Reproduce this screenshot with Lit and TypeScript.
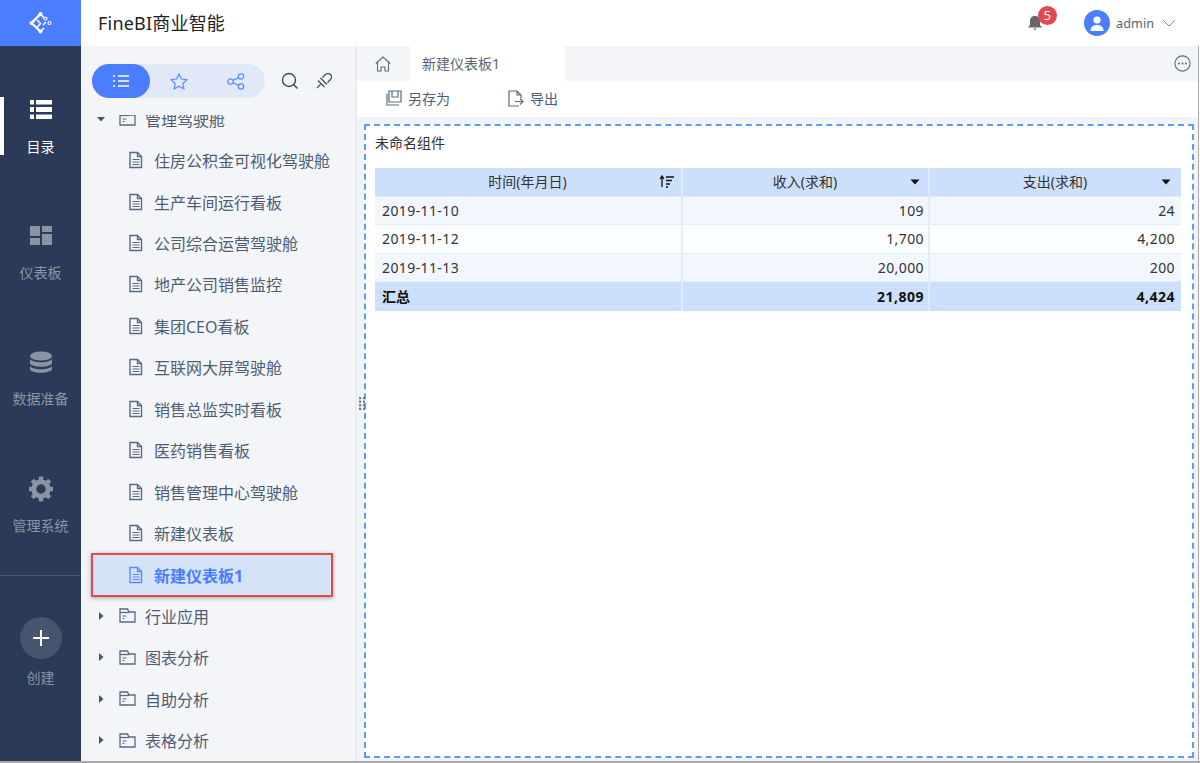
import { LitElement, html, css, svg } from "lit";
import { customElement } from "lit/decorators.js";

const docIcon = (c = "#5a6a80") => html`<svg class="doc" width="16" height="18" viewBox="0 0 16 18" fill="none" stroke=${c} stroke-width="1.4"><path d="M2 1.500h7.500l4 4V16.500H2z"/><path d="M9.500 1.500v4h4"/><path d="M4.500 8.500h7M4.500 11h7M4.500 13.500h7" stroke-width="1.100"/></svg>`;
const folderIcon = html`<svg class="folder" width="17" height="15" viewBox="0 0 17 15" fill="none" stroke="#5a6a80" stroke-width="1.300"><path d="M1 14V1h7.500l1.500 3H16V14z"/><path d="M1 4.500h9"/><path d="M3.500 8h4M3.500 10.500h2" stroke-width="1.100"/></svg>`;
const triDown = html`<svg class="tri" width="10" height="10" viewBox="0 0 10 10"><path d="M1 3h8L5 7.500z" fill="#46566c"/></svg>`;
const triRight = html`<svg class="tri" width="10" height="10" viewBox="0 0 10 10"><path d="M3 1l4.500 4L3 9z" fill="#46566c"/></svg>`;
const sortDown = html`<svg width="10" height="6" viewBox="0 0 10 6"><path d="M0.500 0.500h9L5 5.500z" fill="#111"/></svg>`;
const gearTeeth = [0, 45, 90, 135, 180, 225, 270, 315].map((a) => svg`<rect x="9.800" y="0.500" width="4.400" height="5" rx="0.800" transform="rotate(${a} 12 13)"/>`);
const gripDots = [0, 1].flatMap((c) => [0, 1, 2, 3].map((r) => svg`<rect x=${c * 4} y=${r * 3.6} width="2.200" height="2.200"/>`));

@customElement("app-root")
export class AppRoot extends LitElement {
  static styles = css`
    :host { display: block; width: 1200px; height: 763px; overflow: hidden; background: #fff;
      font-family: "Noto Sans", "Noto Sans CJK SC", sans-serif; color: #3d4d66; }
    * { box-sizing: border-box; }
    .app { display: grid; grid-template-columns: 81px 1fr; height: 763px; border-bottom: 2px solid #a9a9a9; }
    .rail { background: #2a3a57; display: flex; flex-direction: column; min-height: 0; }
    .logo { height: 46px; background: #4a7dff; display: flex; align-items: center; justify-content: center; flex: none; }
    .rail-items { display: flex; flex-direction: column; padding-top: 46px; height: 529px; flex: none; }
    .rail-item { height: 126.400px; flex: none; display: flex; flex-direction: column; align-items: center; gap: 12.500px; padding-top: 5px;
      font-size: 14px; color: #8b94a5; position: relative; }
    .rail-item.on { color: #fff; }
    .rail-item.on::before { content: ""; position: absolute; left: 0; top: 5px; width: 4px; height: 58px; background: #fff; }
    .rail-item svg { height: 26px; flex: none; }
    .rail-sep { height: 1px; background: #4a586f; flex: none; }
    .create { display: flex; flex-direction: column; align-items: center; gap: 8px; padding-top: 41px; font-size: 14px; color: #8b94a5; }
    .plus { width: 42px; height: 42px; border-radius: 50%; background: #46546e; display: flex; align-items: center; justify-content: center; }

    .right { display: grid; grid-template-rows: 46px 1fr; min-width: 0; min-height: 0; }
    .header { display: flex; align-items: center; padding-left: 17px; padding-right: 24px; background: #fff; }
    .title { font-size: 18px; color: #222; flex: 1; letter-spacing: 0.200px; padding-bottom: 2px; }
    .bell { position: relative; width: 14px; height: 20px; margin-right: 42px; display: flex; }
    .bell svg { margin-top: 2px; }
    .badge { position: absolute; left: 9.500px; top: -7.500px; width: 19px; height: 19px; border-radius: 50%; background: #e5484d;
      color: #fff; font-size: 13px; display: flex; align-items: center; justify-content: center; }
    .avatar { width: 26px; height: 26px; border-radius: 50%; background: #4a7dff; display: flex; align-items: center; justify-content: center; margin-right: 6px; }
    .user { font-size: 12.700px; color: #5c6470; margin-right: 8px; }

    .body { display: grid; grid-template-columns: 276px 1fr; min-height: 0; }
    .panel { background: #f3f5f9; border-right: 2px solid #e8ebf0; position: relative; z-index: 2; display: flex; flex-direction: column; min-height: 0; }
    .tools { display: flex; align-items: center; height: 36px; margin: 17px 0 0 11px; flex: none; }
    .seg { width: 173px; height: 34px; background: #e1e8f7; border-radius: 17px; display: grid; grid-template-columns: 58px 1fr 1fr; align-items: center; justify-items: center; margin-right: 16px; }
    .seg .active { width: 58px; height: 34px; border-radius: 17px; background: #4a7dff; display: flex; align-items: center; justify-content: center; }
    .pin { margin-left: 17px; }
    .tree-clip { overflow: hidden; margin-top: 16px; flex: 1; min-height: 0; }
    .tree { display: flex; flex-direction: column; margin-top: -17px; }
    .row { height: 41.430px; display: flex; align-items: center; font-size: 16px; color: #4e5d74; white-space: nowrap; flex: none; }
    .row.folder-row { padding-left: 15px; }
    .row .tri { margin-right: 13px; }
    .row .folder { margin-right: 9px; }
    .row.doc-row { padding-left: 47px; }
    .row .doc { margin-right: 10px; }
    .row.sel { margin: -0.500px 0 -2.070px 10px; width: 242px; height: 44px; padding-left: 35px; background: #d5e3f8; border: 2px solid #e5484d;
      box-shadow: 0 1px 4px rgba(60,60,60,.45); color: #4a7dff; font-weight: 700; }
    .grip { position: absolute; left: 278px; top: 351px; display: flex; }

    .main { display: grid; grid-template-rows: 35px 36px 1fr; min-width: 0; min-height: 0; background: #f1f3f7; margin-right: 1px; border-right: 1px solid #a9a9a9; }
    .tabs { display: flex; align-items: stretch; background: #f3f5f9; }
    .home { width: 53px; display: flex; align-items: center; justify-content: center; padding-right: 2px; }
    .tab { width: 155px; background: #fff; font-size: 14px; color: #5a6576; display: flex; align-items: center; padding: 0 0 2px 12px; }
    .spacer { flex: 1; }
    .more { width: 25px; display: flex; align-items: center; justify-content: center; padding: 0 6px 0 0; }
    .toolbar { background: #fff; display: flex; align-items: center; font-size: 14px; color: #4e5d74; padding: 0 0 2px 29px; }
    .tb { display: flex; align-items: center; gap: 6px; }
    .tb.first { width: 122px; }
    .canvas { padding: 7px 4px 3px 7px; min-height: 0; }
    .widget { height: 100%; background: #fff; border: 2px dashed #5a9df8; padding: 0 11px 0 9px; display: flex; flex-direction: column; }
    .wt { font-size: 14px; color: #333; height: 42px; padding-bottom: 10px; display: flex; align-items: center; flex: none; }
    .table { display: grid; grid-template-columns: 308px 247px 1fr; font-size: 14px; color: #333; }
    .c { height: 28.500px; display: flex; align-items: center; padding: 0 6px 0 7px; border-right: 2px solid #e2edfc; border-bottom: 1.500px solid #e2edfc; }
    .c:nth-child(3n) { border-right: 0; }
    .c:nth-child(3n+2) { padding-right: 4px; }
    .h { background: #cce0fb; justify-content: center; position: relative; border-color: #dfeafb; padding: 0 7px 1px 6px; }
    .h:nth-child(2) { padding-right: 7px; }
    .h .s { position: absolute; right: 10px; top: 11px; display: flex; }
    .h:nth-child(2) .s { right: 8px; }
    .h .sf { top: 7px; right: 7px; }
    .odd { background: #f2f7fe; letter-spacing: 0.400px; }
    .even { background: #fcfdff; letter-spacing: 0.400px; }
    .r { justify-content: flex-end; }
    .t { background: #cce0fb; font-weight: 700; border-bottom: 0; border-color: #dfeafb; color: #111; }
    .t.r { letter-spacing: 0.500px; }
  `;

  render() {
    const docs = ["住房公积金可视化驾驶舱", "生产车间运行看板", "公司综合运营驾驶舱", "地产公司销售监控", "集团CEO看板", "互联网大屏驾驶舱", "销售总监实时看板", "医药销售看板", "销售管理中心驾驶舱", "新建仪表板"];
    const folders = ["行业应用", "图表分析", "自助分析", "表格分析"];
    const rows = [["2019-11-10", "109", "24"], ["2019-11-12", "1,700", "4,200"], ["2019-11-13", "20,000", "200"]];
    return html`<div class="app">
      <aside class="rail">
        <div class="logo">
          <svg width="24" height="24" viewBox="0 0 24 24" fill="none" stroke="#fff">
            <path d="M11.500 3 2.500 12l9 8.500" stroke-width="2.400"/>
            <path d="M11.500 3l3.500 4M8 9l3.500 3.500L8 16.500M11.500 20.500l3.500-3.500M14 14l3-3" stroke-width="1.500"/>
            <circle cx="11.500" cy="3" r="2" fill="#fff" stroke="none"/><circle cx="2.500" cy="12" r="2" fill="#fff" stroke="none"/><circle cx="11.500" cy="20.500" r="2" fill="#fff" stroke="none"/>
            <circle cx="16.500" cy="7.500" r="1.500" stroke-width="1.100"/><circle cx="20.500" cy="12" r="1.500" stroke-width="1.100"/>
          </svg>
        </div>
        <div class="rail-items">
          <div class="rail-item on">
            <svg width="24" height="26" viewBox="0 0 24 26" fill="#fff"><path d="M1 3h4v4.500H1zM7 3h16v4.500H7zM1 10h4v5H1zM7 10h16v5H7zM1 17.500h4V22H1zM7 17.500h16V22H7z"/></svg>
            <span>目录</span>
          </div>
          <div class="rail-item">
            <svg width="22" height="26" viewBox="0 0 22 26" fill="#8b94a5"><path d="M0 3h10v10H0zM12 3h10v6H12zM12 11h10v11H12zM0 15h10v7H0z"/></svg>
            <span>仪表板</span>
          </div>
          <div class="rail-item">
            <svg width="24" height="26" viewBox="0 0 24 26" fill="#8b94a5"><ellipse cx="12" cy="6" rx="11" ry="4.500"/><path d="M1 8.500c1 5 21 5 22 0v4.500c-1 5-21 5-22 0zM1 15.500c1 5 21 5 22 0v3.500c-1 5-21 5-22 0z"/></svg>
            <span>数据准备</span>
          </div>
          <div class="rail-item">
            <svg width="24" height="26" viewBox="0 0 24 26" fill="#8b94a5">${gearTeeth}<circle cx="12" cy="13" r="7.200" fill="none" stroke="#8b94a5" stroke-width="5"/></svg>
            <span>管理系统</span>
          </div>
        </div>
        <div class="rail-sep"></div>
        <div class="create">
          <div class="plus"><svg width="16" height="16" viewBox="0 0 16 16"><path d="M8 0v16M0 8h16" stroke="#fff" stroke-width="2"/></svg></div>
          <span>创建</span>
        </div>
      </aside>
      <div class="right">
        <header class="header">
          <div class="title">FineBI商业智能</div>
          <div class="bell">
            <svg width="14" height="16" viewBox="0 0 14 16"><path d="M7 1c3 0 5 2 5 5v4l2 2.500H0L2 10V6c0-3 2-5 5-5zM5.500 13.500h3L7 15.500z" fill="#666"/></svg>
            <div class="badge">5</div>
          </div>
          <div class="avatar"><svg width="14" height="15" viewBox="0 0 14 15" fill="#fff"><circle cx="7" cy="4" r="3.600"/><path d="M0.500 15c0-4 2.500-6 6.500-6s6.500 2 6.500 6z"/></svg></div>
          <div class="user">admin</div>
          <svg width="14" height="8" viewBox="0 0 14 8" fill="none" stroke="#7c8490" stroke-width="1"><path d="M1 1l6 6 6-6"/></svg>
        </header>
        <div class="body">
          <section class="panel">
            <div class="tools">
              <div class="seg">
                <div class="active"><svg width="16" height="12" viewBox="0 0 16 12" stroke="#fff" stroke-width="1.300"><path d="M0 1h2M5 1h11M0 6h2M5 6h11M0 11h2M5 11h11"/></svg></div>
                <svg width="18" height="17" viewBox="0 0 18 17" fill="none" stroke="#5b8cff" stroke-width="1.200"><path d="M9 1l2.400 5 5.500.700-4 3.800 1 5.400L9 13.300 4.100 15.900l1-5.400-4-3.800 5.500-.7z"/></svg>
                <svg width="18" height="17" viewBox="0 0 18 17" fill="none" stroke="#5b8cff" stroke-width="1.200"><circle cx="3.500" cy="8.500" r="2.700"/><circle cx="14" cy="3.500" r="2.700"/><circle cx="14" cy="13.500" r="2.700"/><path d="M6 7.300l5.600-2.700M6 9.700l5.600 2.700"/></svg>
              </div>
              <svg width="18" height="18" viewBox="0 0 18 18" fill="none" stroke="#3d4a5c" stroke-width="1.400"><circle cx="8" cy="8" r="6.500"/><path d="M12.800 12.800l3.700 3.700"/></svg>
              <svg class="pin" width="16" height="16" viewBox="0 0 16 16" fill="none" stroke="#3d4a5c" stroke-width="1.200"><path d="M6.500 4.500l3-3a3.500 3.500 0 0 1 5 5l-3 3M4.500 5l6.500 6.500M2 7.500l6.500 6.500M6.500 7L9 9.500M1 15l3.500-3.500"/></svg>
            </div>
            <div class="tree-clip"><div class="tree">
              <div class="row folder-row">${triDown}${folderIcon}<span>管理驾驶舱</span></div>
              ${docs.map((d) => html`<div class="row doc-row">${docIcon()}<span>${d}</span></div>`)}
              <div class="row doc-row sel">${docIcon("#5b8cff")}<span>新建仪表板1</span></div>
              ${folders.map((f) => html`<div class="row folder-row">${triRight}${folderIcon}<span>${f}</span></div>`)}
            </div></div>
            <svg class="grip" width="7" height="14" viewBox="0 0 7 14" fill="#6b7a90">${gripDots}</svg>
          </section>
          <section class="main">
            <div class="tabs">
              <div class="home"><svg width="16" height="16" viewBox="0 0 16 16" fill="none" stroke="#5a6a80" stroke-width="1.100"><path d="M0.800 7.500L8 1l7.200 6.500M2.500 6.500V15H6v-4h4v4h3.500V6.500"/></svg></div>
              <div class="tab">新建仪表板1</div>
              <div class="spacer"></div>
              <div class="more"><svg width="17" height="17" viewBox="0 0 17 17" fill="none" style="flex:none"><circle cx="8.500" cy="8.500" r="7.600" stroke="#5a6a80" stroke-width="1.100"/><circle cx="5" cy="8.500" r="1" fill="#5a6a80"/><circle cx="8.500" cy="8.500" r="1" fill="#5a6a80"/><circle cx="12" cy="8.500" r="1" fill="#5a6a80"/></svg></div>
            </div>
            <div class="toolbar">
              <div class="tb first"><svg width="16" height="16" viewBox="0 0 16 16" fill="none" stroke="#5a6a80" stroke-width="1.200"><path d="M3 1h12v11H3zM6 1v6h6V1M1 3.500V15h12"/></svg><span>另存为</span></div>
              <div class="tb"><svg width="16" height="17" viewBox="0 0 16 17" fill="none" stroke="#5a6a80" stroke-width="1.200"><path d="M11 16H1V1h8l4 4v3M9 1v4h4M7 11.500h8M12 8.500l3 3-3 3"/></svg><span>导出</span></div>
            </div>
            <div class="canvas">
              <div class="widget">
                <div class="wt">未命名组件</div>
                <div class="table">
                  <div class="c h">时间(年月日)<span class="s sf"><svg width="15" height="13" viewBox="0 0 15 13" stroke="#111" stroke-width="1.300" fill="none"><path d="M3 12V2M1 4l2-3 2 3M7 2h8M7 5.500h6M7 9h4M7 12h2"/></svg></span></div>
                  <div class="c h">收入(求和)<span class="s">${sortDown}</span></div>
                  <div class="c h">支出(求和)<span class="s">${sortDown}</span></div>
                  ${rows.map((r, i) => html`
                    <div class="c ${i % 2 ? "even" : "odd"}">${r[0]}</div>
                    <div class="c r ${i % 2 ? "even" : "odd"}">${r[1]}</div>
                    <div class="c r ${i % 2 ? "even" : "odd"}">${r[2]}</div>`)}
                  <div class="c t">汇总</div>
                  <div class="c t r">21,809</div>
                  <div class="c t r">4,424</div>
                </div>
              </div>
            </div>
          </section>
        </div>
      </div>
    </div>`;
  }
}
